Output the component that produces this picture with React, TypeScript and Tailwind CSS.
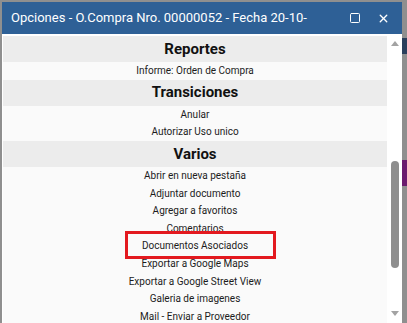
import { Square, X } from 'lucide-react';

const reportes = ['Informe: Orden de Compra'];
const transiciones = ['Anular', 'Autorizar Uso unico'];
const varios = [
  'Abrir en nueva pestaña',
  'Adjuntar documento',
  'Agregar a favoritos',
  'Comentarios',
  'Documentos Asociados',
  'Exportar a Google Maps',
  'Exportar a Google Street View',
  'Galeria de imagenes',
  'Mail - Enviar a Proveedor',
];

function Section({ title, items }: { title: string; items: string[] }) {
  return (
    <div>
      <div className="h-[26px] bg-[#ececec] flex items-center justify-center text-[15px] font-bold text-[#111]">
        {title}
      </div>
      {items.map((item) => (
        <div
          key={item}
          className="h-[17.6px] flex items-center justify-center text-[10px] text-[#1c1c1c] cursor-pointer hover:bg-[#e6eef7]"
        >
          {item}
        </div>
      ))}
    </div>
  );
}

export default function App() {
  return (
    <div className="w-[407px] h-[323px] overflow-hidden bg-[#8f8f8f] pt-[2px] flex font-['Roboto',sans-serif]">
      {/* borde de la pagina detras */}
      <div className="w-[2px] shrink-0" />

      {/* Ventana de opciones */}
      <div className="w-[400px] shrink-0 flex flex-col bg-white relative">
        <div className="h-[32px] shrink-0 bg-[#2e6096] flex items-center pl-[9px] pr-[12px] text-white">
          <span className="text-[13px] flex-1 whitespace-nowrap overflow-hidden">
            Opciones - O.Compra Nro. 00000052 - Fecha 20-10-
          </span>
          <Square size={12} strokeWidth={2} className="mr-[16px]" />
          <X size={13} strokeWidth={2.5} />
        </div>

        <div className="flex shrink-0 pt-[2px]">
          <div className="w-[384px] ml-[1px] bg-[#fafafa]">
            <Section title="Reportes" items={reportes} />
            <Section title="Transiciones" items={transiciones} />
            <Section title="Varios" items={varios} />
          </div>

          {/* Barra de scroll */}
          <div className="flex-1 flex flex-col items-center pt-[5px]">
            <div className="w-0 h-0 border-l-[4px] border-r-[4px] border-b-[5px] border-l-transparent border-r-transparent border-b-[#a3a3a3]" />
            <div className="w-[8px] h-[107px] rounded-full bg-[#8e8e8e] mt-[115px]" />
            <div className="w-0 h-0 mt-[43px] border-l-[4px] border-r-[4px] border-t-[5px] border-l-transparent border-r-transparent border-t-[#a3a3a3]" />
          </div>
        </div>

        {/* Marca roja sobre "Documentos Asociados" */}
        <div className="absolute left-[123px] top-[229px] w-[151px] h-[28px] border-[3px] border-[#e3191f] pointer-events-none" />
      </div>

      {/* Fragmentos de la pagina de fondo */}
      <div className="flex-1 flex flex-col">
        <div className="h-[36px]" />
        <div className="h-[16px] bg-[#2a3f5c]" />
        <div className="h-[106px]" />
        <div className="h-[26px] bg-[#6b1a6e]" />
      </div>
    </div>
  );
}
